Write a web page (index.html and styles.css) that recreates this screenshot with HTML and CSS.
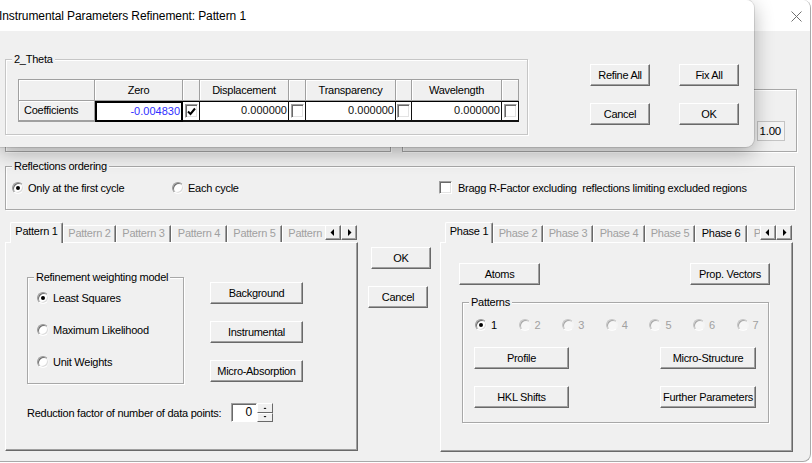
FILE: index.html
```html
<!DOCTYPE html>
<html>
<head>
<meta charset="utf-8">
<title>Refinement</title>
<link rel="stylesheet" href="styles.css">
</head>
<body>
<div class="app">
  <div class="titlebar">
    <svg class="close" width="11" height="11" viewBox="0 0 11 11"><path d="M0.5 0.5L10.5 10.5M10.5 0.5L0.5 10.5" stroke="#707070" stroke-width="1"/></svg>
  </div>

  <div class="toprow">
    <div class="etch grp-a"></div>
    <div class="etch grp-b"><div class="edit small">1.00</div></div>
  </div>

  <fieldset class="etch refl">
    <legend>Reflections ordering</legend>
    <div class="refl-row">
      <span class="opt opt-first"><span class="radio on"></span>Only at the first cycle</span>
      <span class="opt opt-each"><span class="radio"></span>Each cycle</span>
      <span class="opt opt-bragg"><span class="chk"></span>Bragg R-Factor excluding&nbsp; reflections limiting excluded regions</span>
    </div>
  </fieldset>

  <div class="bottom">
    <div class="tabctl">
      <div class="tabstrip">
        <div class="tabs">
          <span class="tab sel w53">Pattern 1</span>
          <span class="tab dis w53">Pattern 2</span>
          <span class="tab dis w55">Pattern 3</span>
          <span class="tab dis w56">Pattern 4</span>
          <span class="tab dis w55">Pattern 5</span>
          <span class="tab dis w55">Pattern 6</span>
        </div>
        <div class="arrows">
          <span class="arr"><svg width="14" height="13" viewBox="0 0 14 13"><path d="M8 3v7L4.5 6.5z" fill="#000"/></svg></span>
          <span class="arr"><svg width="14" height="13" viewBox="0 0 14 13"><path d="M6 3v7l3.5-3.5z" fill="#000"/></svg></span>
        </div>
      </div>
      <div class="panel pl">
        <div class="pl-row">
          <fieldset class="etch weight">
            <legend>Refinement weighting model</legend>
            <div class="wopts">
              <span class="opt"><span class="radio on"></span>Least Squares</span>
              <span class="opt"><span class="radio"></span>Maximum Likelihood</span>
              <span class="opt"><span class="radio"></span>Unit Weights</span>
            </div>
          </fieldset>
          <div class="pl-btns">
            <button class="btn b93">Background</button>
            <button class="btn b93">Instrumental</button>
            <button class="btn b93">Micro-Absorption</button>
          </div>
        </div>
        <div class="reduce">
          <span class="reduce-label">Reduction factor of number of data points:</span>
          <span class="edit spin-edit">0</span>
          <span class="spinner">
            <span class="sp"><svg width="14" height="7" viewBox="0 0 14 7"><path d="M5.5 5h3L7 3.5z" fill="#000"/></svg></span>
            <span class="sp"><svg width="14" height="7" viewBox="0 0 14 7"><path d="M5.5 2h3L7 3.5z" fill="#000"/></svg></span>
          </span>
        </div>
      </div>
    </div>

    <div class="mid">
      <button class="btn mid-ok">OK</button>
      <button class="btn mid-cancel">Cancel</button>
    </div>

    <div class="tabctl">
      <div class="tabstrip">
        <div class="tabs">
          <span class="tab sel w48">Phase 1</span>
          <span class="tab dis w50">Phase 2</span>
          <span class="tab dis w50">Phase 3</span>
          <span class="tab dis w52">Phase 4</span>
          <span class="tab dis w50">Phase 5</span>
          <span class="tab w52">Phase 6</span>
          <span class="tab dis w52">Phase 7</span>
        </div>
        <div class="arrows">
          <span class="arr"><svg width="14" height="13" viewBox="0 0 14 13"><path d="M8 3v7L4.5 6.5z" fill="#000"/></svg></span>
          <span class="arr"><svg width="14" height="13" viewBox="0 0 14 13"><path d="M6 3v7l3.5-3.5z" fill="#000"/></svg></span>
        </div>
      </div>
      <div class="panel pr">
        <div class="pr-row">
          <button class="btn atoms">Atoms</button>
          <button class="btn propv">Prop. Vectors</button>
        </div>
        <fieldset class="etch patterns">
          <legend>Patterns</legend>
          <div class="pradios">
            <span class="popt"><span class="radio on"></span>1</span>
            <span class="popt dis"><span class="radio"></span>2</span>
            <span class="popt dis"><span class="radio"></span>3</span>
            <span class="popt dis"><span class="radio"></span>4</span>
            <span class="popt dis"><span class="radio"></span>5</span>
            <span class="popt dis"><span class="radio"></span>6</span>
            <span class="popt dis"><span class="radio"></span>7</span>
          </div>
          <div class="prow">
            <button class="btn b95">Profile</button>
            <button class="btn b96 right">Micro-Structure</button>
          </div>
          <div class="prow second">
            <button class="btn b95">HKL Shifts</button>
            <button class="btn b96 right">Further Parameters</button>
          </div>
        </fieldset>
      </div>
    </div>
  </div>
</div>

<div class="dialog">
  <div class="dlg-title">Instrumental Parameters Refinement: Pattern 1</div>
  <div class="dlg-body">
    <fieldset class="etch theta">
      <legend>2_Theta</legend>
      <div class="grid">
        <div class="th"></div>
        <div class="th">Zero</div>
        <div class="th"></div>
        <div class="th">Displacement</div>
        <div class="th"></div>
        <div class="th">Transparency</div>
        <div class="th"></div>
        <div class="th">Wavelength</div>
        <div class="th"></div>

        <div class="th rh">Coefficients</div>
        <div class="td val blue focus">-0.004830</div>
        <div class="td ck"><span class="chk on"><svg width="11" height="11" viewBox="0 0 11 11"><path d="M2 5.5l2.5 2.5L9 2.5" fill="none" stroke="#000" stroke-width="2"/></svg></span></div>
        <div class="td val">0.000000</div>
        <div class="td ck"><span class="chk"></span></div>
        <div class="td val">0.000000</div>
        <div class="td ck"><span class="chk"></span></div>
        <div class="td val">0.000000</div>
        <div class="td ck last"><span class="chk"></span></div>
      </div>
    </fieldset>
    <div class="dlg-btns">
      <button class="btn">Refine All</button>
      <button class="btn">Fix All</button>
      <button class="btn">Cancel</button>
      <button class="btn">OK</button>
    </div>
  </div>
</div>
</body>
</html>
```

FILE: styles.css
```css
* { box-sizing: border-box; }

body {
  margin: 0;
  background: #ffffff;
  font: 11px "Liberation Sans", Arial, sans-serif;
  letter-spacing: -0.25px;
  color: #000;
  position: relative;
  width: 812px;
  height: 463px;
  overflow: hidden;
}

.app {
  width: 811px;
  height: 462px;
  background: #f0f0f0;
  border-right: 1px solid #a9a9a9;
  border-bottom: 1px solid #a9a9a9;
  border-radius: 0 8px 8px 0;
  overflow: hidden;
}

.titlebar {
  height: 31px;
  background: #fff;
  display: flex;
  justify-content: flex-end;
  align-items: flex-start;
  padding: 11px 8px 0 0;
}

/* group boxes */
.etch {
  border: 1px solid #a8a8a8;
  box-shadow: inset 1px 1px #fff, 1px 1px #fff;
  margin: 0;
  padding: 0;
  min-width: 0;
}

legend {
  padding: 0 2px;
  margin-left: 6px;
  line-height: 13px;
  background: #f0f0f0;
  white-space: nowrap;
}

.toprow {
  margin-top: 7px;
  height: 114px;
  display: flex;
  align-items: flex-end;
}

.grp-a {
  margin-left: 5px;
  width: 386px;
  height: 114px;
}

.grp-b {
  margin-left: 11px;
  width: 395px;
  height: 63px;
  display: flex;
  justify-content: flex-end;
  align-items: flex-start;
  padding: 31px 11px 0 0;
}

.edit {
  background: #fff;
  border: 1px solid;
  border-color: #a0a0a0 #fff #fff #a0a0a0;
  box-shadow: inset 1px 1px #696969;
  text-align: right;
}

.edit.small {
  width: 28px;
  height: 20px;
  line-height: 18px;
  padding-right: 3px;
  background: #f4f4f4;
  border-color: #c4c4c4;
  box-shadow: none;
  font-size: 11.5px;
}

/* reflections */
.refl {
  margin: 8px 0 0 5px;
  width: 790px;
  height: 50px;
}

.refl-row {
  margin-top: 8px;
  height: 13px;
  display: flex;
  align-items: center;
}

.opt {
  display: flex;
  align-items: center;
  white-space: nowrap;
  height: 13px;
}

.opt .radio { margin-right: 4px; }
.opt .chk { margin-right: 6px; }

.opt-first { margin-left: 6px; width: 160px; }
.opt-each { width: 267px; }

.radio {
  display: inline-block;
  flex: none;
  width: 12px;
  height: 12px;
  border-radius: 50%;
  background: #fff;
  border: 1px solid;
  border-color: #9a9a9a #f4f4f4 #fdfdfd #9a9a9a;
  box-shadow: inset 1px 1px #6e6e6e, inset -1px -1px #dcdcdc;
  position: relative;
}

.radio.on::after {
  content: "";
  position: absolute;
  left: 3px;
  top: 3px;
  width: 4px;
  height: 4px;
  border-radius: 50%;
  background: #000;
}

.chk {
  display: inline-flex;
  flex: none;
  align-items: center;
  justify-content: center;
  width: 13px;
  height: 13px;
  background: #fff;
  border: 1px solid;
  border-color: #a0a0a0 #fff #fff #a0a0a0;
  box-shadow: inset 1px 1px #696969, inset -1px -1px #e3e3e3;
}

/* bottom tab area */
.bottom {
  margin-top: 12px;
  display: flex;
  align-items: flex-start;
}

.tabctl {
  width: 353px;
  margin-left: 5px;
  display: flex;
  flex-direction: column;
}

.tabstrip {
  height: 21px;
  margin-bottom: -1px;
  display: flex;
  position: relative;
  z-index: 1;
  padding-left: 5px;
}

.tabs {
  flex: 1;
  display: flex;
  align-items: flex-start;
  overflow: hidden;
  min-width: 0;
}

.tab {
  flex: none;
  height: 17px;
  margin-top: 3px;
  background: #f0f0f0;
  border-top: 1px solid #fff;
  border-left: 1px solid #fff;
  border-right: 1px solid #696969;
  box-shadow: inset -1px 0 #a0a0a0;
  text-align: center;
  line-height: 15px;
  white-space: nowrap;
  overflow: hidden;
}

.tab.sel {
  height: 21px;
  margin-top: 0;
  line-height: 17px;
  border-radius: 2px 2px 0 0;
}

.tab.dis { color: #a0a0a0; }

.w48 { width: 48px; }
.w50 { width: 50px; }
.w52 { width: 52px; }
.w53 { width: 53px; }
.w55 { width: 55px; }
.w56 { width: 56px; }

.arrows {
  display: flex;
  margin-top: 3px;
  margin-right: 1px;
}

.arr {
  width: 16px;
  height: 15px;
  display: flex;
  align-items: center;
  justify-content: center;
  background: #f0f0f0;
  border: 1px solid;
  border-color: #fff #696969 #696969 #fff;
  box-shadow: inset -1px -1px #a0a0a0;
}

.panel {
  background: #f0f0f0;
  border: 1px solid;
  border-color: #fff #696969 #696969 #fff;
  box-shadow: inset -1px -1px #a0a0a0;
}

.pl {
  height: 209px;
  padding: 28px 0 0 21px;
}

.pr {
  height: 210px;
  padding: 20px 0 0 18px;
}

.pl-row {
  display: flex;
  align-items: flex-start;
}

.weight {
  width: 157px;
  height: 113px;
}

.wopts {
  padding: 7px 0 0 9px;
  display: flex;
  flex-direction: column;
  gap: 19px;
}

.pl-btns {
  margin: 11px 0 0 26px;
  display: flex;
  flex-direction: column;
  gap: 17px;
}

.btn {
  display: flex;
  align-items: center;
  justify-content: center;
  height: 22px;
  padding: 0;
  margin: 0;
  background: #f0f0f0;
  border: 1px solid;
  border-color: #fff #696969 #696969 #fff;
  box-shadow: inset -1px -1px #a0a0a0;
  font: inherit;
  letter-spacing: -0.3px;
  color: #000;
  white-space: nowrap;
}

.b93 { width: 93px; }
.b95 { width: 95px; }
.b96 { width: 96px; }

.reduce {
  margin-top: 19px;
  display: flex;
  align-items: center;
  height: 19px;
}

.reduce-label { width: 204px; white-space: nowrap; }

.spin-edit {
  width: 26px;
  height: 19px;
  line-height: 17px;
  padding-right: 4px;
  font-size: 12px;
}

.spinner {
  display: flex;
  flex-direction: column;
  width: 16px;
  height: 19px;
}

.sp {
  flex: 1;
  display: flex;
  align-items: center;
  justify-content: center;
  background: #f0f0f0;
  border: 1px solid;
  border-color: #fff #696969 #696969 #fff;
}

/* middle buttons */
.mid {
  width: 82px;
  display: flex;
  flex-direction: column;
  align-items: flex-start;
}

.mid-ok { width: 60px; margin: 25px 0 0 13px; }
.mid-cancel { width: 60px; margin: 17px 0 0 10px; }

.mid + .tabctl { margin-left: 0; }

/* right panel */
.pr-row {
  display: flex;
}

.atoms { width: 81px; }
.propv { width: 80px; margin-left: 150px; }

.patterns {
  margin: 11px 0 0 3px;
  width: 307px;
  height: 127px;
}

.pradios {
  margin-top: 9px;
  padding-left: 12px;
  display: flex;
  height: 13px;
}

.popt {
  width: 43.6px;
  flex: none;
  display: flex;
  align-items: center;
}

.popt .radio { margin-right: 4px; }
.popt.dis { color: #a0a0a0; }
.popt.dis .radio { border-color: #c4c4c4 #f4f4f4 #fdfdfd #c4c4c4; box-shadow: inset 1px 1px #a8a8a8; background: #f6f6f6; }

.prow {
  margin: 16px 0 0 11px;
  display: flex;
}

.prow.second { margin-top: 17px; }

.prow .right { margin-left: 91px; }

/* overlay dialog */
.dialog {
  position: absolute;
  left: 0;
  top: 0;
  width: 754px;
  height: 147px;
  background: #f0f0f0;
  border-radius: 0 8px 8px 0;
  box-shadow: 0 6px 20px rgba(0, 0, 0, 0.30), 0 0 0 1px rgba(0, 0, 0, 0.10);
  overflow: hidden;
}

.dlg-title {
  height: 31px;
  background: #fff;
  line-height: 33px;
  font-size: 12px;
  letter-spacing: -0.1px;
  padding-left: 0;
  text-indent: -1px;
  white-space: nowrap;
}

.dlg-body {
  display: flex;
  align-items: flex-start;
}

.theta {
  margin: 22px 0 0 5px;
  width: 523px;
  height: 82px;
  border-color: #c6c6c6;
}

.grid {
  margin: 13px 0 0 12px;
  display: grid;
  grid-template-columns: 76px 88px 17px 89px 17px 90px 16px 90px 17px;
  grid-template-rows: 21px 21px;
  border-top: 1px solid #a0a0a0;
  border-left: 1px solid #a0a0a0;
  width: 501px;
}

.th {
  background: #f0f0f0;
  border-right: 1px solid #a0a0a0;
  border-bottom: 1px solid #a0a0a0;
  box-shadow: inset 1px 1px #fff;
  text-align: center;
  line-height: 20px;
  white-space: nowrap;
  overflow: hidden;
}

.th.rh {
  text-align: left;
  padding-left: 5px;
  border-bottom: 2px solid #a0a0a0;
  line-height: 18px;
}

.td {
  background: #fff;
  border-top: 1px solid #000;
  border-bottom: 2px solid #111;
  border-right: 1px solid #111;
}

.val {
  text-align: right;
  padding-right: 1px;
  line-height: 17px;
  letter-spacing: 0;
  color: #111;
}

.val.blue { color: #2f2fff; }

.val.focus {
  border: 2px solid #000;
  line-height: 16px;
}

.ck {
  display: flex;
  align-items: center;
  justify-content: center;
}

.ck .chk { width: 13px; height: 14px; }

.dlg-btns {
  margin: 33px 0 0 62px;
  display: grid;
  grid-template-columns: 60px 60px;
  column-gap: 29px;
  row-gap: 17px;
}
```
